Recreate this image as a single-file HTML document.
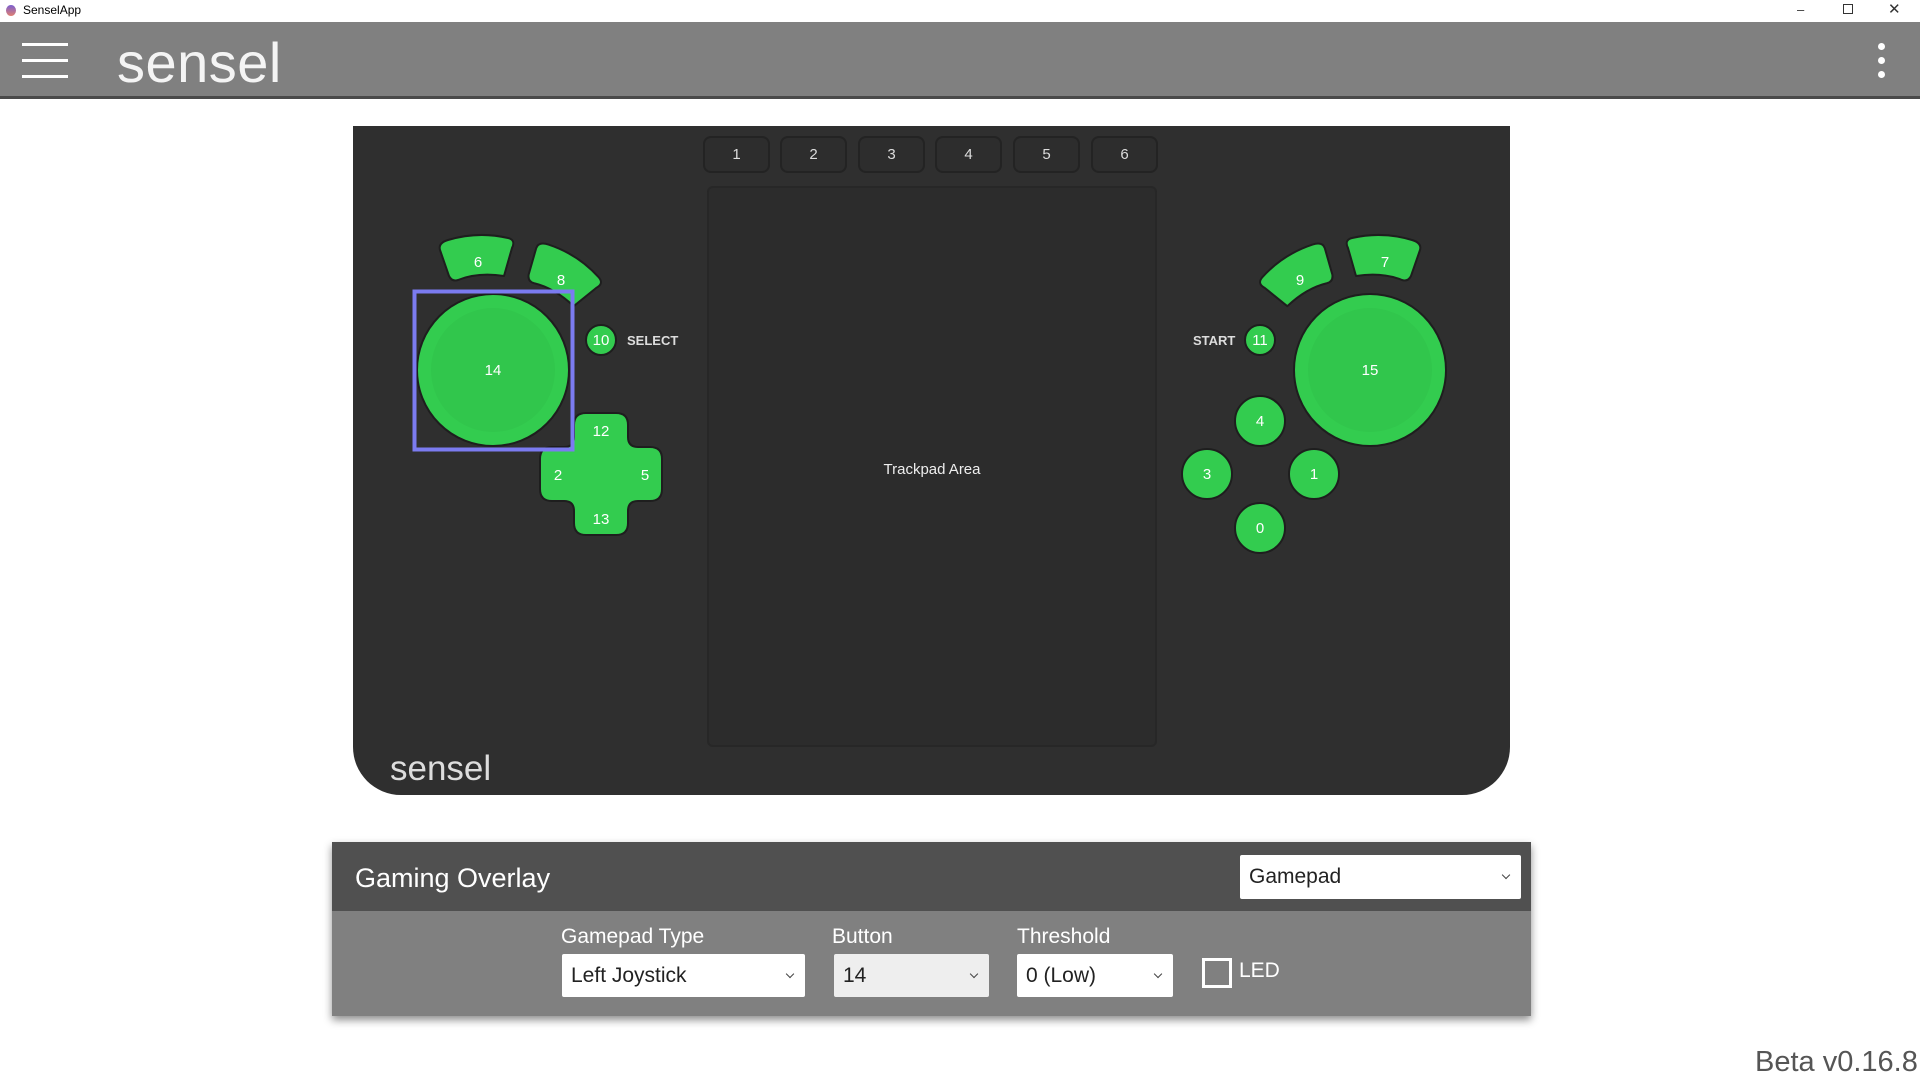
<!DOCTYPE html>
<html><head><meta charset="utf-8"><style>
body{margin:0;width:1920px;height:1077px;background:#fff;position:relative;overflow:hidden;font-family:"Liberation Sans",sans-serif}
.a{position:absolute}
.tab{position:absolute;top:136px;width:67px;height:37px;border-radius:8px;background:#2d2d2d;box-shadow:inset 0 0 0 2px #232323;color:#ddd;font-size:15px;line-height:38px;text-align:center}
.sel{position:absolute;background:#fff;border-radius:2px;font-size:21px;color:#222;line-height:43px;padding-left:9px;box-sizing:border-box;height:43px}
.sel:after{content:"";position:absolute;right:12px;top:17px;width:5px;height:5px;border-right:1.5px solid #444;border-bottom:1.5px solid #444;transform:rotate(45deg)}
.lbl{position:absolute;top:925px;color:#fff;font-size:21px}
</style></head><body>
<div class="a" style="left:0;top:0;width:1920px;height:22px;background:#fff"></div>
<div class="a" style="left:6px;top:5px;width:10px;height:11px;border-radius:50%;background:linear-gradient(#7a5fd0,#e07f70)"></div>
<div class="a" style="left:23px;top:3px;font-size:12px;color:#000">SenselApp</div>
<div class="a" style="left:1797px;top:2px;font-size:13px;color:#333">–</div>
<div class="a" style="left:1843px;top:4px;width:8px;height:8px;border:1px solid #333"></div>
<div class="a" style="left:1888px;top:0px;font-size:15px;color:#333">✕</div>
<div class="a" style="left:0;top:22px;width:1920px;height:74px;background:#808080;border-bottom:3px solid #4a4a4a"></div>
<div class="a" style="left:22px;top:43px;width:46px;height:3px;background:#fff"></div>
<div class="a" style="left:22px;top:59px;width:46px;height:3px;background:#fff"></div>
<div class="a" style="left:22px;top:75px;width:46px;height:3px;background:#fff"></div>
<div class="a" style="left:117px;top:30px;font-size:56px;color:#f4f4f4;letter-spacing:0.5px">sensel</div>
<div class="a" style="left:1878px;top:43px;width:7px;height:7px;border-radius:50%;background:#fff"></div>
<div class="a" style="left:1878px;top:57px;width:7px;height:7px;border-radius:50%;background:#fff"></div>
<div class="a" style="left:1878px;top:71px;width:7px;height:7px;border-radius:50%;background:#fff"></div>

<div class="a" style="left:353px;top:126px;width:1157px;height:669px;background:#2f2f2f;border-radius:0 0 48px 48px"></div>
<div class="tab" style="left:703px">1</div><div class="tab" style="left:780px">2</div><div class="tab" style="left:858px">3</div><div class="tab" style="left:935px">4</div><div class="tab" style="left:1013px">5</div><div class="tab" style="left:1091px">6</div>
<div class="a" style="left:707px;top:186px;width:450px;height:561px;background:#2c2c2c;border-radius:6px;box-shadow:inset 0 0 0 2px #272727"></div>
<div class="a" style="left:707px;top:461px;width:450px;text-align:center;color:#eee;font-size:15px">Trackpad Area</div>
<div class="a" style="left:390px;top:749px;font-size:35px;color:#ddd">sensel</div>

<svg class="a" style="left:0;top:0" width="1920" height="1077">
<g fill="#33cc4f" stroke="#1e1e1e" stroke-width="2" stroke-linejoin="round">
<path d="M448,240 Q478,231 508,238 Q516,240 512,248 L504,276 Q478,272 458,280 Q452,282 449,276 L440,250 Q438,243 448,240Z"/>
<path transform="rotate(35 561 279)" d="M531,258 Q561,249 591,256 Q599,258 595,266 L587,294 Q561,290 541,298 Q535,300 532,294 L523,268 Q521,261 531,258Z"/>
<path d="M1412,240 Q1382,231 1352,238 Q1344,240 1348,248 L1356,276 Q1382,272 1402,280 Q1408,282 1411,276 L1420,250 Q1422,243 1412,240Z"/>
<path transform="rotate(-35 1300 279)" d="M1330,258 Q1300,249 1270,256 Q1262,258 1266,266 L1274,294 Q1300,290 1320,298 Q1326,300 1329,294 L1338,268 Q1340,261 1330,258Z"/>
<circle cx="493" cy="370" r="76"/><circle cx="1370" cy="370" r="76"/>
<circle cx="601" cy="340" r="15"/><circle cx="1260" cy="340" r="15"/>
<circle cx="1260" cy="421" r="25"/><circle cx="1207" cy="474" r="25"/><circle cx="1314" cy="474" r="25"/><circle cx="1260" cy="528" r="25"/>
<path d="M586,413 L616,413 Q628,413 628,425 L628,437 Q628,447 638,447 L650,447 Q662,447 662,459 L662,489 Q662,501 650,501 L638,501 Q628,501 628,511 L628,523 Q628,535 616,535 L586,535 Q574,535 574,523 L574,511 Q574,501 564,501 L552,501 Q540,501 540,489 L540,459 Q540,447 552,447 L564,447 Q574,447 574,437 L574,425 Q574,413 586,413Z"/>
</g>
<circle cx="493" cy="370" r="62" fill="#31c64c"/><circle cx="1370" cy="370" r="62" fill="#31c64c"/>
<rect x="414.5" y="291.5" width="158" height="158" fill="none" stroke="#7b7bf0" stroke-width="4"/>
<g fill="#fff" font-family="Liberation Sans,sans-serif" font-size="15" text-anchor="middle">
<text x="478" y="267">6</text><text x="561" y="285">8</text><text x="1385" y="267">7</text><text x="1300" y="285">9</text>
<text x="493" y="375">14</text><text x="1370" y="375">15</text>
<text x="601" y="345">10</text><text x="1260" y="345">11</text>
<text x="1260" y="426">4</text><text x="1207" y="479">3</text><text x="1314" y="479">1</text><text x="1260" y="533">0</text>
<text x="601" y="436">12</text><text x="558" y="480">2</text><text x="645" y="480">5</text><text x="601" y="524">13</text>
</g>
<g fill="#ddd" font-family="Liberation Sans,sans-serif" font-size="13" font-weight="bold">
<text x="627" y="345">SELECT</text><text x="1193" y="345">START</text>
</g>
</svg>

<div class="a" style="left:332px;top:842px;width:1199px;height:174px;box-shadow:0 4px 8px rgba(0,0,0,.45)"></div>
<div class="a" style="left:332px;top:842px;width:1199px;height:69px;background:#505050"></div>
<div class="a" style="left:332px;top:911px;width:1199px;height:105px;background:#808080"></div>
<div class="a" style="left:355px;top:863px;font-size:27px;color:#fff">Gaming Overlay</div>
<div class="sel" style="left:1240px;top:855px;width:281px;height:44px">Gamepad</div>
<div class="lbl" style="left:561px">Gamepad Type</div>
<div class="lbl" style="left:832px">Button</div>
<div class="lbl" style="left:1017px">Threshold</div>
<div class="sel" style="left:562px;top:954px;width:243px">Left Joystick</div>
<div class="sel" style="left:834px;top:954px;width:155px;background:#eee">14</div>
<div class="sel" style="left:1017px;top:954px;width:156px">0 (Low)</div>
<div class="a" style="left:1202px;top:958px;width:24px;height:24px;border:3px solid #fff"></div>
<div class="a" style="left:1239px;top:959px;font-size:21px;color:#fff">LED</div>
<div class="a" style="left:1755px;top:1046px;font-size:29px;color:#555">Beta v0.16.8</div>
</body></html>
